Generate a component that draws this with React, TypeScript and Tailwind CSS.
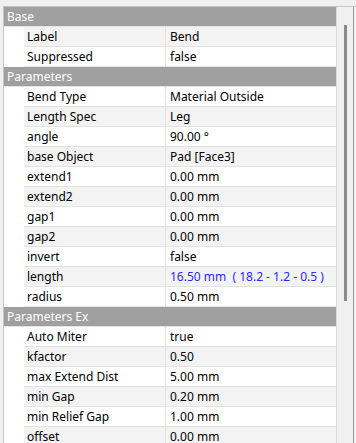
import React from "react";

type Row = { h?: string; n?: string; v?: string; blue?: boolean };

const rows: Row[] = [
  { h: "Base" },
  { n: "Label", v: "Bend" },
  { n: "Suppressed", v: "false" },
  { h: "Parameters" },
  { n: "Bend Type", v: "Material Outside" },
  { n: "Length Spec", v: "Leg" },
  { n: "angle", v: "90.00 °" },
  { n: "base Object", v: "Pad [Face3]" },
  { n: "extend1", v: "0.00 mm" },
  { n: "extend2", v: "0.00 mm" },
  { n: "gap1", v: "0.00 mm" },
  { n: "gap2", v: "0.00 mm" },
  { n: "invert", v: "false" },
  { n: "length", v: "16.50 mm  ( 18.2 - 1.2 - 0.5 )", blue: true },
  { n: "radius", v: "0.50 mm" },
  { h: "Parameters Ex" },
  { n: "Auto Miter", v: "true" },
  { n: "kfactor", v: "0.50" },
  { n: "max Extend Dist", v: "5.00 mm" },
  { n: "min Gap", v: "0.20 mm" },
  { n: "min Relief Gap", v: "1.00 mm" },
  { n: "offset", v: "0.00 mm" },
];

export default function App() {
  return (
    <div
      className="w-[356px] h-[443px] bg-[#f0f0f0] overflow-hidden pt-[6px] pl-[3px] text-[12px] text-black"
      style={{ fontFamily: '"Noto Sans", "Open Sans", sans-serif' }}
    >
      <div className="flex h-[460px] border-l border-t border-[#c4c4c4]">
        <div className="w-[332px] bg-white flex flex-col">
          {rows.map((r, i) =>
            r.h ? (
              <div
                key={i}
                className="h-[20px] shrink-0 bg-[#a0a0a0] text-white border-b border-[#e4e4e4] pl-[3px] pt-[1px] flex items-center leading-none"
              >
                {r.h}
              </div>
            ) : (
              <div key={i} className="h-[20px] shrink-0 flex">
                <div className="w-[20px] bg-white" />
                <div
                  className={
                    "flex-1 flex border-b border-[#e2e2e2] " +
                    (i % 2 === 1 ? "bg-[#f3f3f3]" : "bg-white")
                  }
                >
                  <div className="w-[142px] border-r border-[#e2e2e2] pl-[3px] pt-[1px] flex items-center leading-none whitespace-nowrap">
                    {r.n}
                  </div>
                  <div
                    className={
                      "flex-1 pl-[4px] pt-[1px] flex items-center leading-none whitespace-pre " +
                      (r.blue ? "text-[#2a2aff]" : "")
                    }
                  >
                    {r.v}
                  </div>
                </div>
              </div>
            )
          )}
        </div>
        <div className="w-px bg-[#dadada]" />
        <div className="w-[16px] bg-[#f0f0f0] flex justify-center">
          <div className="w-[3px] h-[276px] mt-[18px] bg-[#8a8a8a]" />
        </div>
        <div className="w-px bg-[#9a9a9a]" />
      </div>
    </div>
  );
}
